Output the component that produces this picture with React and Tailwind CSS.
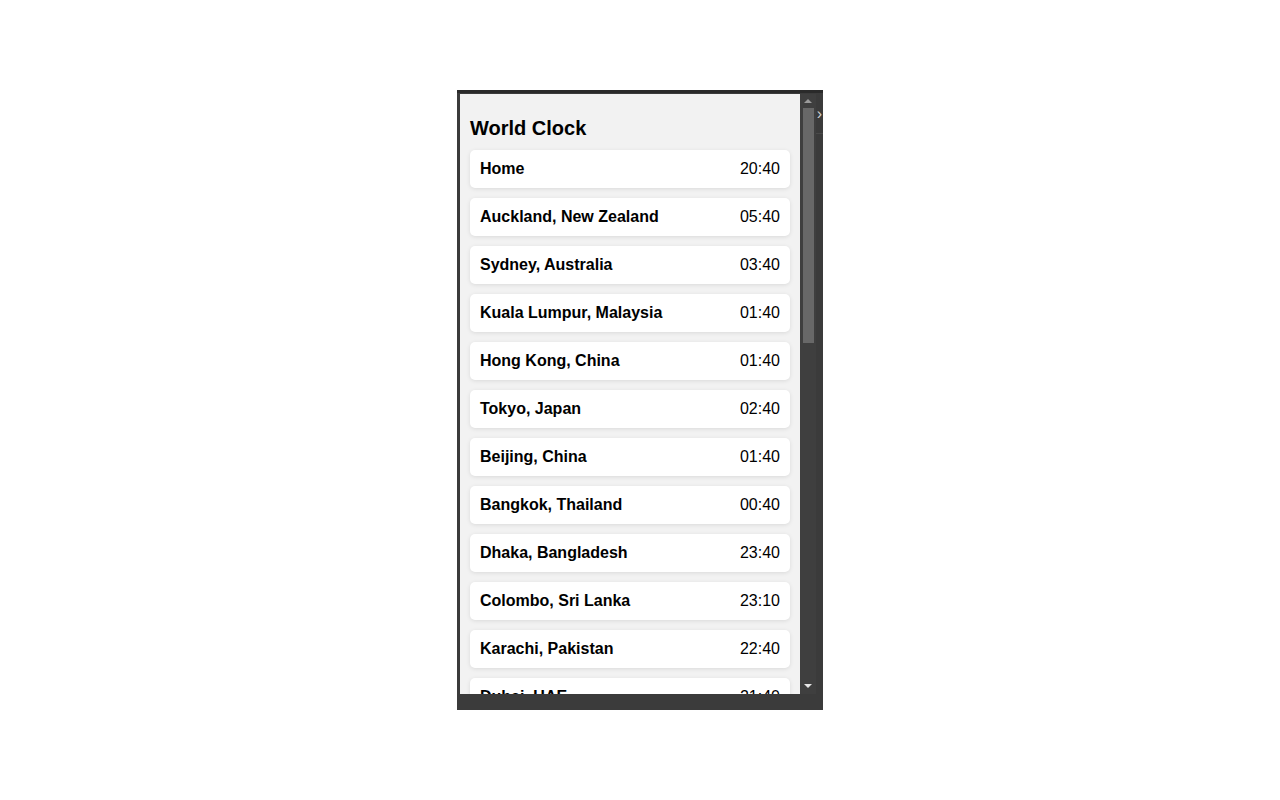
import React from "react";

const clocks = [
  ["Home", "20:40"],
  ["Auckland, New Zealand", "05:40"],
  ["Sydney, Australia", "03:40"],
  ["Kuala Lumpur, Malaysia", "01:40"],
  ["Hong Kong, China", "01:40"],
  ["Tokyo, Japan", "02:40"],
  ["Beijing, China", "01:40"],
  ["Bangkok, Thailand", "00:40"],
  ["Dhaka, Bangladesh", "23:40"],
  ["Colombo, Sri Lanka", "23:10"],
  ["Karachi, Pakistan", "22:40"],
  ["Dubai, UAE", "21:40"],
];

function ClockRow({ city, time }) {
  return (
    <div className="flex items-center justify-between h-[38px] shrink-0 px-[10px] bg-white rounded-[5px] shadow-[0_1px_4px_rgba(0,0,0,0.1)]">
      <span className="font-bold">{city}</span>
      <span>{time}</span>
    </div>
  );
}

function Scrollbar() {
  return (
    <div className="w-[16px] flex flex-col items-center bg-[#3f3f3f]">
      <div className="h-[14px] flex items-center justify-center">
        <div className="w-0 h-0 border-x-[4px] border-x-transparent border-b-[4px] border-b-[#9a9a9a]" />
      </div>
      <div className="w-[11px] h-[235px] bg-[#686868]" />
      <div className="flex-1" />
      <div className="h-[16px] flex items-center justify-center">
        <div className="w-0 h-0 border-x-[4px] border-x-transparent border-t-[4px] border-t-[#e6e6e6]" />
      </div>
    </div>
  );
}

export default function App() {
  return (
    <div className="w-[1280px] h-[800px] bg-white pt-[90px] pl-[457px] font-['Liberation_Sans',Arial,sans-serif] text-[16px] text-black">
      <div className="w-[366px] h-[620px] bg-[#3b3b3b] border-t-[3px] border-t-[#2a2a2a] pt-[1px] pl-[3px] flex">
        <div className="flex h-[600px]">
          <div className="w-[340px] bg-[#f2f2f2] overflow-hidden px-[10px] pt-[22px]">
            <h2 className="text-[20px] leading-[24px] font-bold mb-[10px]">World Clock</h2>
            <div className="flex flex-col gap-[10px]">
              {clocks.map(([city, time]) => (
                <ClockRow key={city} city={city} time={time} />
              ))}
            </div>
          </div>
          <Scrollbar />
        </div>
        <div className="flex-1 flex flex-col">
          <div className="h-[40px] flex items-center justify-center text-[16px] leading-none text-[#d0d0d0] border-b border-b-[#4a4a4a]">›</div>
        </div>
      </div>
    </div>
  );
}
